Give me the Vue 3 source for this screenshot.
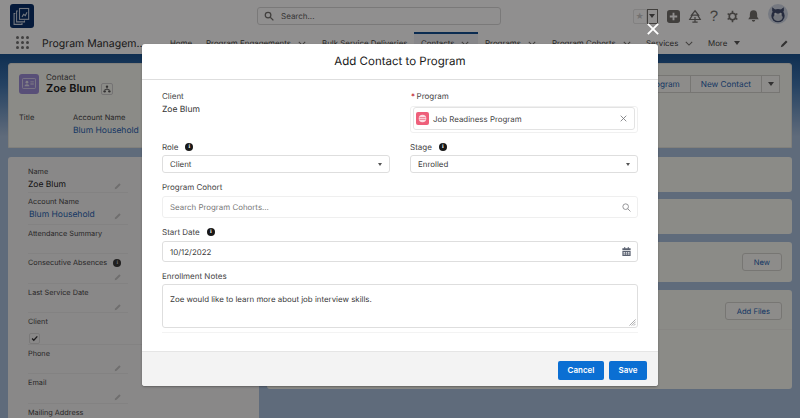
<template>
  <div class="page">
    <header class="topbar">
      <div class="logo">
        <svg viewBox="0 0 24 24" width="20" height="20" fill="none" stroke="#c9d2e0" stroke-width="1.3">
          <rect x="9" y="3" width="11" height="13" />
          <path d="M7 6H5.500v13H15v-1.500M4 9H2.500v13H12v-1.500" />
          <path d="M12 13l2-3 2 1.500 2-4" />
        </svg>
      </div>
      <div class="search">
        <svg viewBox="0 0 16 16" width="10" height="10" fill="none" stroke="#706e6b" stroke-width="2"><circle cx="6.500" cy="6.500" r="4.500" /><path d="M10 10l5 5" /></svg>
        <span>Search...</span>
      </div>
      <div class="utils">
        <div class="fav">
          <span class="fav-star">★</span>
          <span class="fav-drop"><i class="caret"></i></span>
        </div>
        <svg viewBox="0 0 14 14" width="13" height="13"><rect width="14" height="14" rx="3" fill="#706e6b" /><path d="M7 3v8M3 7h8" stroke="#fff" stroke-width="2" /></svg>
        <svg viewBox="0 0 16 16" width="14" height="14" fill="none" stroke="#706e6b" stroke-width="1.400"><path d="M8 2l4 5H4zM5 7l-3 5h12l-3-5M8 9v6M5 15h6" /></svg>
        <span class="help">?</span>
        <svg viewBox="0 0 16 16" width="13" height="13" fill="none" stroke="#706e6b" stroke-width="2"><circle cx="8" cy="8" r="4" /><path d="M8 1v3M8 12v3M2 4.500l2.500 1.500M11.500 10l2.500 1.500M14 4.500L11.500 6M4.500 10L2 11.500" /></svg>
        <svg viewBox="0 0 16 16" width="13" height="14" fill="#706e6b"><path d="M8 1c3 0 4.500 2 4.500 5v3l2 3h-13l2-3V6c0-3 1.500-5 4.500-5zM6 13h4c0 1.500-1 2-2 2s-2-.5-2-2z" /></svg>
        <span class="avatar">
          <svg viewBox="0 0 24 24" width="20" height="20"><path d="M5 9V4l4 3h6l4-3v5" fill="#3d4a6c" /><circle cx="12" cy="14" r="8" fill="#3d4a6c" /><ellipse cx="12" cy="16" rx="5.500" ry="4.500" fill="#c9d0da" /><circle cx="9" cy="12" r="1.500" fill="#e8ecf2" /><circle cx="15" cy="12" r="1.500" fill="#e8ecf2" /></svg>
        </span>
      </div>
    </header>

    <nav class="nav">
      <span class="waffle"><i v-for="n in 9" :key="n"></i></span>
      <span class="app-name">Program Managem...</span>
      <div class="tabs">
        <span v-for="t in tabs" :key="t.label" class="tab" :class="{ active: t.active }" :style="{ width: t.width + 'px' }">
          {{ t.label }}
          <svg v-if="t.chev" viewBox="0 0 10 6" width="8" height="5" fill="none" stroke="#706e6b" stroke-width="1.300"><path d="M1 1l4 4 4-4" /></svg>
          <i v-if="t.caret" class="caret"></i>
        </span>
      </div>
      <svg class="pencil" viewBox="0 0 12 12" width="9" height="9"><path d="M1 11l1-3 6-6 2 2-6 6z" fill="#555" /></svg>
    </nav>

    <main class="content">
      <section class="highlights">
        <div class="hl-top">
          <span class="contact-icon">
            <svg viewBox="0 0 20 16" width="14" height="11" fill="#e4e1ee"><rect x="0.600" y="0.600" width="18.800" height="14.800" rx="1.500" fill="none" stroke="#e4e1ee" stroke-width="1.200" /><circle cx="7" cy="6" r="2" /><path d="M3.500 12c0-2 1.500-3 3.500-3s3.500 1 3.500 3zM12 5h5v1.300h-5zM12 8h5v1.300h-5z" /></svg>
          </span>
          <div class="hl-name">
            <div class="hl-type">Contact</div>
            <div class="hl-title">Zoe Blum</div>
          </div>
          <span class="hier">
            <svg viewBox="0 0 12 12" width="8" height="8" fill="#555"><circle cx="6" cy="2.500" r="1.800" /><circle cx="2.500" cy="9.500" r="1.800" /><circle cx="9.500" cy="9.500" r="1.800" /><path d="M5.500 4h1v2h3v2h-1V7h-5v1h-1V6h3z" /></svg>
          </span>
          <div class="actions">
            <span class="act">Add to Program</span>
            <span class="act">New Contact</span>
            <span class="act act-drop"><i class="caret"></i></span>
          </div>
        </div>
        <div class="hl-fields">
          <div class="hl-field hl-field-title"><span>Title</span></div>
          <div class="hl-field"><span>Account Name</span><a>Blum Household</a></div>
        </div>
      </section>

      <div class="columns">
        <aside class="details">
          <div v-for="f in fields" :key="f.label" class="field" :class="{ wide: f.check }" :style="{ height: f.h + 'px' }">
            <div class="field-label">
              {{ f.label }}
              <b v-if="f.info" class="info small">i</b>
            </div>
            <div class="field-value">
              <a v-if="f.link">{{ f.value }}</a>
              <span v-else-if="f.check" class="check-box">
                <svg viewBox="0 0 10 10" width="7" height="7" fill="none" stroke="#2b2b2e" stroke-width="1.800"><path d="M1.500 5l2.500 2.500 5-5.500" /></svg>
              </span>
              <span v-else>{{ f.value }}</span>
              <svg v-if="f.edit" class="edit" viewBox="0 0 12 12" width="8" height="8"><path d="M1 11l1-3 6-6 2 2-6 6z" fill="#c4c4c4" /></svg>
            </div>
          </div>
        </aside>
        <div class="side">
          <div class="side-card c1"></div>
          <div class="side-card c2"></div>
          <div class="side-card c3"><span class="act solo">New</span></div>
          <div class="side-card c4">
            <div class="c4-head"><span class="act solo">Add Files</span></div>
          </div>
        </div>
      </div>
    </main>

    <div class="backdrop">
      <button class="close" title="Close">
        <svg viewBox="0 0 14 14" width="12" height="12" stroke="#fff" stroke-width="2.200"><path d="M1 1l12 12M13 1L1 13" /></svg>
      </button>
      <div class="modal">
        <div class="modal-head">Add Contact to Program</div>
        <div class="modal-body">
          <div class="two row-client">
            <div>
              <div class="label">Client</div>
              <div class="static">Zoe Blum</div>
            </div>
            <div>
              <div class="label"><span class="req">*</span>Program</div>
              <div class="pill-wrap">
                <div class="pill">
                  <span class="pill-icon">
                    <svg viewBox="0 0 12 12" width="9" height="9"><circle cx="6" cy="6" r="5" fill="#fbdde3" /><path d="M2 4.800h8M2 7.200h8" stroke="#ee5f7a" stroke-width="1" /></svg>
                  </span>
                  <span class="pill-text">Job Readiness Program</span>
                  <svg viewBox="0 0 10 10" width="7" height="7" stroke="#77787c" stroke-width="1.200"><path d="M1 1l8 8M9 1L1 9" /></svg>
                </div>
              </div>
            </div>
          </div>
          <div class="row two">
            <div>
              <div class="label">Role <b class="info">i</b></div>
              <div class="input select">Client<i class="caret"></i></div>
            </div>
            <div>
              <div class="label">Stage <b class="info">i</b></div>
              <div class="input select">Enrolled<i class="caret"></i></div>
            </div>
          </div>
          <div class="row">
            <div class="label">Program Cohort</div>
            <div class="input cohort">
              <span class="placeholder">Search Program Cohorts...</span>
              <svg viewBox="0 0 16 16" width="9" height="9" fill="none" stroke="#8a8a8d" stroke-width="1.600"><circle cx="6.500" cy="6.500" r="5" /><path d="M10 10l5 5" /></svg>
            </div>
          </div>
          <div class="row">
            <div class="label">Start Date <b class="info">i</b></div>
            <div class="input date">
              10/12/2022
              <svg viewBox="0 0 12 12" width="9" height="9" fill="#5a6170"><path d="M3 0h1.300v1.500H7.700V0H9v1.500h2.500V4H.5V1.500H3zM.5 5h11v7H.5zM2 6.500v1.300h2V6.500zm3 0v1.300h2V6.500zm3 0v1.300h2V6.500zm-6 2.300v1.300h2V8.800zm3 0v1.300h2V8.800zm3 0v1.300h2V8.800z" /></svg>
            </div>
          </div>
          <div class="row last">
            <div class="label">Enrollment Notes</div>
            <div class="input notes">
              Zoe would like to learn more about job interview skills.
              <svg class="grip" viewBox="0 0 8 8" width="7" height="7" stroke="#8a8a8d" stroke-width=".8"><path d="M7.500 0.500l-7 7M7.500 3l-4.500 4.500M7.500 5.500l-2 2" /></svg>
            </div>
          </div>
        </div>
        <div class="modal-foot">
          <button class="brand cancel">Cancel</button>
          <button class="brand save">Save</button>
        </div>
      </div>
    </div>
  </div>
</template>

<script setup>
const tabs = [
  { label: 'Home', width: 36 },
  { label: 'Program Engagements', chev: true, width: 116 },
  { label: 'Bulk Service Deliveries', width: 99 },
  { label: 'Contacts', chev: true, active: true, width: 64 },
  { label: 'Programs', chev: true, width: 67 },
  { label: 'Program Cohorts', chev: true, width: 94 },
  { label: 'Services', chev: true, width: 62 },
  { label: 'More', caret: true, width: 50 }
]

const fields = [
  { label: 'Name', value: 'Zoe Blum', edit: true, h: 30 },
  { label: 'Account Name', value: 'Blum Household', link: true, edit: true, h: 32 },
  { label: 'Attendance Summary', value: '', h: 29 },
  { label: 'Consecutive Absences', value: '', info: true, edit: true, h: 30 },
  { label: 'Last Service Date', value: '', edit: true, h: 29 },
  { label: 'Client', check: true, h: 32 },
  { label: 'Phone', value: '', edit: true, h: 29 },
  { label: 'Email', value: '', edit: true, h: 30 },
  { label: 'Mailing Address', value: '', h: 30 }
]
</script>

<style>
html, body { margin: 0; background: #5f6b7b; }
</style>

<style scoped>
.page {
  position: relative;
  width: 800px;
  height: 418px;
  overflow: hidden;
  font-family: Inter, "Liberation Sans", sans-serif;
  text-rendering: geometricPrecision;
  color: #181818;
  background: #f3f3f3;
}

.topbar {
  height: 32px;
  display: flex;
  align-items: center;
  padding: 0 12px 0 10px;
  background: #fff;
  box-sizing: border-box;
}
.logo {
  width: 24px;
  height: 24px;
  border-radius: 3px;
  background: #032b66;
  display: flex;
  align-items: center;
  justify-content: center;
}
.search {
  width: 244px;
  height: 18px;
  margin-left: 223px;
  border: 1px solid #d8d8d8;
  border-radius: 3px;
  background: #fff;
  display: flex;
  align-items: center;
  gap: 7px;
  padding-left: 6px;
  box-sizing: border-box;
  font-size: 8px;
  color: #5c5c5c;
}
.utils {
  margin-left: auto;
  display: flex;
  align-items: center;
  gap: 8px;
}
.fav { display: flex; height: 15px; margin-right: 1px; }
.fav-star {
  width: 14px;
  border: 1px solid #e5e5e5;
  border-radius: 2px 0 0 2px;
  box-sizing: border-box;
  font-size: 8px;
  line-height: 13px;
  text-align: center;
  color: #c9c9c9;
}
.fav-drop {
  width: 11px;
  border: 1px solid #706e6b;
  box-sizing: border-box;
  display: flex;
  align-items: center;
  justify-content: center;
}
.help { font-size: 15px; color: #706e6b; font-family: "Liberation Sans", sans-serif; line-height: 1; }
.avatar {
  width: 20px;
  height: 20px;
  border-radius: 50%;
  background: #cfd8e6;
  overflow: hidden;
  margin-top: -4px;
}
.caret {
  display: inline-block;
  width: 0;
  height: 0;
  border-left: 3px solid transparent;
  border-right: 3px solid transparent;
  border-top: 4px solid #555;
}

.nav {
  height: 22px;
  display: flex;
  align-items: center;
  background: #fff;
  padding-left: 16px;
  font-size: 7.900px;
  color: #3e3e3c;
  position: relative;
}
.waffle {
  display: grid;
  grid-template-columns: repeat(3, 3px);
  gap: 2px;
  width: 13px;
  margin-top: -2px;
}
.waffle i { width: 3px; height: 3px; background: #6f6f6f; border-radius: 50%; }
.app-name { font-size: 10.500px; margin-left: 13px; width: 121px; color: #2b2b2b; white-space: nowrap; }
.tabs { display: flex; }
.tab {
  display: flex;
  align-items: center;
  gap: 7px;
  height: 22px;
  padding-left: 7px;
  white-space: nowrap;
  box-sizing: border-box;
}
.tab.active { border-top: 2px solid #0b4a8f; background: #eef1f6; padding-bottom: 2px; }
.pencil { position: absolute; right: 11px; top: 7px; }

.content {
  height: 364px;
  padding: 9px 8px 0;
  box-sizing: border-box;
  background: linear-gradient(#15508f 0, #3a72ad 30px, #a6bdda 82px, #a6bdda 100%);
}
.highlights {
  height: 85px;
  background: #f6f7f1;
  border-radius: 3px 3px 0 0;
  border: 1px solid #e3e3dd;
  box-sizing: border-box;
}
.hl-top {
  height: 39px;
  display: flex;
  align-items: center;
  padding: 0 10px;
}
.contact-icon {
  width: 20px;
  height: 20px;
  background: #9a8ad6;
  border-radius: 3px;
  display: flex;
  align-items: center;
  justify-content: center;
}
.hl-name { margin-left: 7px; }
.hl-type { font-size: 8px; color: #444; line-height: 9px; }
.hl-title { font-size: 11px; font-weight: 600; line-height: 13px; }
.hier {
  width: 12px;
  height: 12px;
  margin: 10px 0 0 5px;
  border: 1px solid #ccc;
  border-radius: 2px;
  box-sizing: border-box;
  display: flex;
  align-items: center;
  justify-content: center;
}
.actions { margin-left: auto; display: flex; margin-right: 1px; }
.act {
  height: 18px;
  display: flex;
  align-items: center;
  padding: 0 10px;
  font-size: 8.200px;
  color: #1b5fb0;
  border: 1px solid #d2d2cc;
  background: #fafaf6;
  box-sizing: border-box;
  margin-left: -1px;
  white-space: nowrap;
}
.act-drop { width: 19px; justify-content: center; padding: 0; }
.hl-fields { display: flex; padding: 10px 10px 0; font-size: 7.500px; color: #444; }
.hl-field { display: flex; flex-direction: column; gap: 4px; }
.hl-field-title { width: 54px; }
.hl-field a { font-size: 8.500px; color: #1b5fb0; }

.columns { display: flex; gap: 8px; margin-top: 9px; }
.details {
  width: 251px;
  height: 270px;
  padding: 6px 0 0 20px;
  box-sizing: border-box;
  background: #f2f2f2;
  border-radius: 3px;
}
.field { width: 100px; border-bottom: 1px solid #e8e8e8; box-sizing: border-box; }
.field.wide { width: 114px; }
.field-label {
  font-size: 7.300px;
  line-height: 10px;
  color: #444;
  padding-top: 4px;
  display: flex;
  align-items: center;
  gap: 6px;
  white-space: nowrap;
}
.field-value {
  font-size: 8.500px;
  line-height: 13px;
  height: 13px;
  padding-top: 2px;
  display: flex;
  align-items: center;
  justify-content: space-between;
}
.field-value a { color: #1b5fb0; padding-left: 1px; }
.edit { margin-left: auto; margin-right: 6px; }
.check-box {
  width: 9px;
  height: 9px;
  margin: 6px 0 0 1px;
  border: 1px solid #d8d8d8;
  border-radius: 2px;
  display: flex;
  align-items: center;
  justify-content: center;
}

.side { flex: 1; display: flex; flex-direction: column; }
.side-card {
  background: #f6f7f1;
  border-radius: 3px;
  display: flex;
  justify-content: flex-end;
  box-sizing: border-box;
  padding-right: 10px;
}
.c1 { height: 35px; margin-bottom: 7px; }
.c2 { height: 35px; margin-bottom: 8px; }
.c3 { height: 40px; margin-bottom: 8px; align-items: center; }
.c4 { height: 99px; padding-right: 0; }
.c4-head {
  width: 100%;
  height: 40px;
  padding: 12px 10px 0 0;
  box-sizing: border-box;
  display: flex;
  justify-content: flex-end;
  border-bottom: 1px solid #eeeeea;
}
.solo { border-radius: 3px; padding: 0 11px; font-size: 7.600px; }

.backdrop {
  position: absolute;
  inset: 0;
  background: rgba(8, 7, 7, 0.45);
}
.close {
  position: absolute;
  left: 647px;
  top: 23px;
  padding: 0;
  border: 0;
  background: none;
  display: flex;
}
.modal {
  position: absolute;
  left: 142px;
  top: 44px;
  width: 516px;
  height: 342px;
  background: #fff;
  border-radius: 3px;
  display: flex;
  flex-direction: column;
  overflow: hidden;
  box-shadow: 0 1px 2px rgba(0, 0, 0, .3);
}
.modal-head {
  height: 36px;
  line-height: 35px;
  flex: none;
  text-align: center;
  font-size: 11.500px;
  border-bottom: 1px solid #dedede;
  box-sizing: border-box;
}
.modal-body {
  flex: 1;
  padding: 11px 20px 0;
}
.row { margin-bottom: 9px; }
.row.last { height: 62px; margin-bottom: 0; border-bottom: 1px solid #f3f3f3; box-sizing: border-box; }
.two { display: grid; grid-template-columns: 228px 228px; column-gap: 20px; }
.row-client { height: 51px; }
.label {
  font-size: 8px;
  line-height: 10px;
  height: 14px;
  color: #444;
  display: flex;
  align-items: flex-start;
}
.req { color: #ba0517; margin-right: 1.500px; margin-left: 1px; }
.static { font-size: 8.500px; line-height: 14px; color: #333; margin-top: -2px; }
.info {
  display: inline-flex;
  align-items: center;
  justify-content: center;
  width: 8px;
  height: 8px;
  margin-left: 7px;
  margin-top: 1px;
  border-radius: 50%;
  background: #181818;
  color: #fff;
  font-size: 6px;
  font-weight: 700;
  font-family: "Liberation Serif", serif;
}
.info.small { margin: 0; background: #333; color: #bbb; }
.input {
  display: flex;
  align-items: center;
  justify-content: space-between;
  padding: 0 6px 0 7px;
  border: 1px solid #dedede;
  border-radius: 3px;
  background: #fff;
  box-sizing: border-box;
  font-size: 7.900px;
  color: #3a3a3a;
  white-space: nowrap;
}
.select { height: 18px; margin-top: -1px; padding-right: 7px; }
.select .caret { border-left-width: 2.500px; border-right-width: 2.500px; border-top-width: 3px; }
.cohort { height: 22px; border-color: #efefef; }
.placeholder { color: #777; }
.date { height: 21px; }
.notes {
  height: 44px;
  margin-top: -1px;
  position: relative;
  align-items: flex-start;
  padding-top: 9px;
}
.grip { position: absolute; right: 1px; bottom: 1px; }
.pill-wrap {
  height: 27px;
  margin-top: 1px;
  border: 1px solid #f0f0f0;
  border-radius: 3px;
  padding: 0 2px 2px;
  box-sizing: border-box;
}
.pill {
  height: 23px;
  border: 1px solid #e3e3e3;
  border-radius: 3px;
  box-sizing: border-box;
  display: flex;
  align-items: center;
  padding: 0 7px 0 2px;
  font-size: 7.900px;
  color: #444;
}
.pill-icon {
  width: 13px;
  height: 13px;
  border-radius: 2px;
  background: #ee5f7a;
  display: flex;
  align-items: center;
  justify-content: center;
}
.pill-text { margin-left: 4px; flex: 1; }
.modal-foot {
  height: 35px;
  flex: none;
  background: #f3f3f3;
  border-top: 1px solid #e5e5e5;
  box-sizing: border-box;
  display: flex;
  align-items: center;
  justify-content: flex-end;
  gap: 5px;
  padding: 2px 11px 0;
}
.brand {
  height: 19px;
  padding: 0;
  border: 0;
  border-radius: 2px;
  background: #0b6fd3;
  color: #fff;
  font-family: inherit;
  font-size: 8px;
  font-weight: 600;
}
.cancel { width: 46px; }
.save { width: 38px; }
</style>
